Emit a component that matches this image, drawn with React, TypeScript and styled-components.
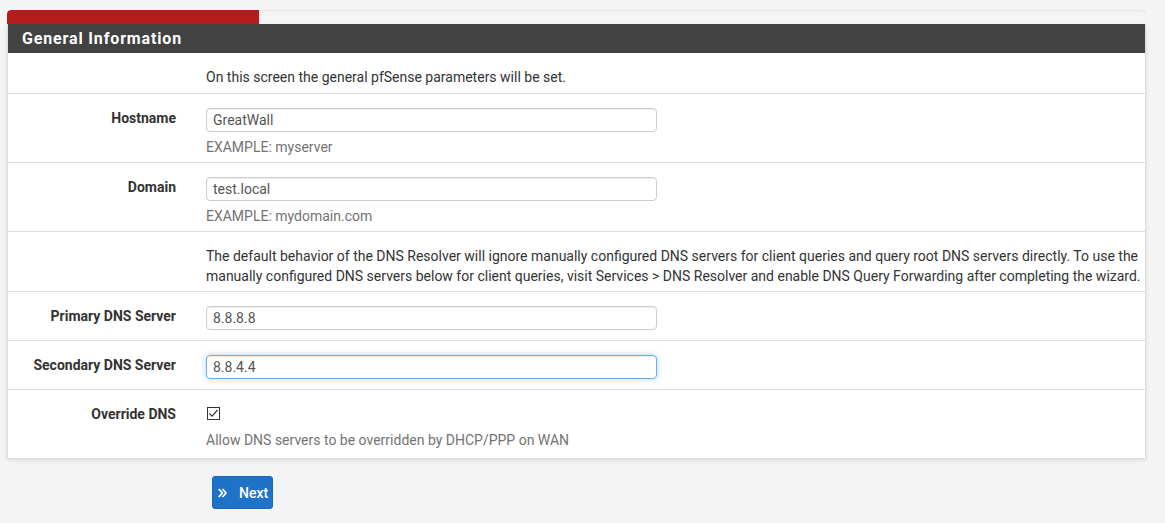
import React from "react";
import styled, { createGlobalStyle } from "styled-components";

const Global = createGlobalStyle`
  html, body { margin: 0; padding: 0; background: #f4f4f4; }
  body { font-family: Roboto, "Liberation Sans", Arial, sans-serif; font-size: 14px; color: #333; }
  * { box-sizing: border-box; }
`;

const Page = styled.div`
  padding: 10px 19px 0 7px;
  width: 1165px;
`;

const Progress = styled.div`
  height: 14px;
  background: #f5f5f5;
  border-radius: 4px 4px 0 0;
  box-shadow: inset 0 1px 2px rgba(0,0,0,0.08);
  overflow: hidden;
`;

const ProgressFill = styled.div`
  height: 100%;
  background: #b71c1c;
  border-radius: 4px 0 0 0;
`;

const Panel = styled.div`
  background: #fff;
  border-left: 1px solid #ddd;
  border-right: 1px solid #ddd;
  box-shadow: 0 2px 4px rgba(0,0,0,0.12);
`;

const Header = styled.div`
  background: #424242;
  color: #fff;
  height: 29px;
  display: flex;
  align-items: center;
  padding-left: 14px;
  font-weight: 700;
  font-size: 16px;
  letter-spacing: 0.85px;
`;

const Row = styled.div<{ $pb: number; $last?: boolean }>`
  display: grid;
  grid-template-columns: 183px 1fr;
  padding: 14px 0 ${(p) => p.$pb}px;
  border-bottom: ${(p) => (p.$last ? "none" : "1px solid #ddd")};
`;

const Label = styled.div`
  text-align: right;
  font-weight: 700;
  padding: 0 15px 0 0;
  line-height: 20px;
  color: #333;
`;

const Field = styled.div`
  padding: 0 0 0 15px;
  line-height: 20px;
`;

const Line = styled.div`
  white-space: nowrap;
`;

const Input = styled.div<{ $focus?: boolean }>`
  width: 451px;
  height: 24px;
  border: 1px solid ${(p) => (p.$focus ? "#66afe9" : "#ccc")};
  border-radius: 4px;
  padding: 0 6px;
  display: flex;
  align-items: center;
  color: #555;
  font-size: 14px;
  box-shadow: ${(p) =>
    p.$focus
      ? "inset 0 1px 1px rgba(0,0,0,.075), 0 0 6px rgba(102,175,233,.5)"
      : "inset 0 1px 1px rgba(0,0,0,.075)"};
`;

const Help = styled.div<{ $mt: number }>`
  margin-top: ${(p) => p.$mt}px;
  color: #737373;
  line-height: 20px;
`;

const Check = styled.span`
  display: inline-flex;
  width: 13px;
  height: 13px;
  border: 1px solid #333;
  margin: 3px 0 0 1px;
  align-items: center;
  justify-content: center;
`;

const Footer = styled.div`
  padding: 18px 0 0 205px;
`;

const Button = styled.button`
  display: inline-flex;
  align-items: center;
  gap: 12px;
  height: 33px;
  padding: 0 4px 0 5px;
  background: #1e73c8;
  border: 1px solid #1a68b8;
  border-radius: 3px;
  color: #fff;
  font-family: Roboto, "Liberation Sans", Arial, sans-serif;
  font-size: 14px;
  font-weight: 500;
`;

export default function App() {
  return (
    <>
      <Global />
      <Page>
        <Progress>
          <ProgressFill style={{ width: 252 }} />
        </Progress>
        <Panel>
          <Header>General Information</Header>
          <Row $pb={6}>
            <div />
            <Field>On this screen the general pfSense parameters will be set.</Field>
          </Row>
          <Row $pb={5}>
            <Label>Hostname</Label>
            <Field>
              <Input>GreatWall</Input>
              <Help $mt={5}>EXAMPLE: myserver</Help>
            </Field>
          </Row>
          <Row $pb={5}>
            <Label>Domain</Label>
            <Field>
              <Input>test.local</Input>
              <Help $mt={5}>EXAMPLE: mydomain.com</Help>
            </Field>
          </Row>
          <Row $pb={5}>
            <div />
            <Field>
              <Line>
                The default behavior of the DNS Resolver will ignore manually configured DNS servers for client queries and query root DNS servers directly. To use the
              </Line>
              <Line>
                manually configured DNS servers below for client queries, visit Services &gt; DNS Resolver and enable DNS Query Forwarding after completing the wizard.
              </Line>
            </Field>
          </Row>
          <Row $pb={10}>
            <Label>Primary DNS Server</Label>
            <Field>
              <Input>8.8.8.8</Input>
            </Field>
          </Row>
          <Row $pb={10}>
            <Label>Secondary DNS Server</Label>
            <Field>
              <Input $focus>8.8.4.4</Input>
            </Field>
          </Row>
          <Row $pb={8} $last>
            <Label>Override DNS</Label>
            <Field>
              <Check>
                <svg width="11" height="11" viewBox="0 0 11 11">
                  <path d="M1.5 5.5 L4.2 8.2 L9.5 2" fill="none" stroke="#333" strokeWidth="1.2" />
                </svg>
              </Check>
              <Help $mt={6}>Allow DNS servers to be overridden by DHCP/PPP on WAN</Help>
            </Field>
          </Row>
        </Panel>
        <Footer>
          <Button>
            <svg width="9" height="10" viewBox="0 0 9 10">
              <path d="M0.8 1 L4.3 5 L0.8 9 M4.5 1 L8 5 L4.5 9" fill="none" stroke="#fff" strokeWidth="1.8" />
            </svg>
            Next
          </Button>
        </Footer>
      </Page>
    </>
  );
}
